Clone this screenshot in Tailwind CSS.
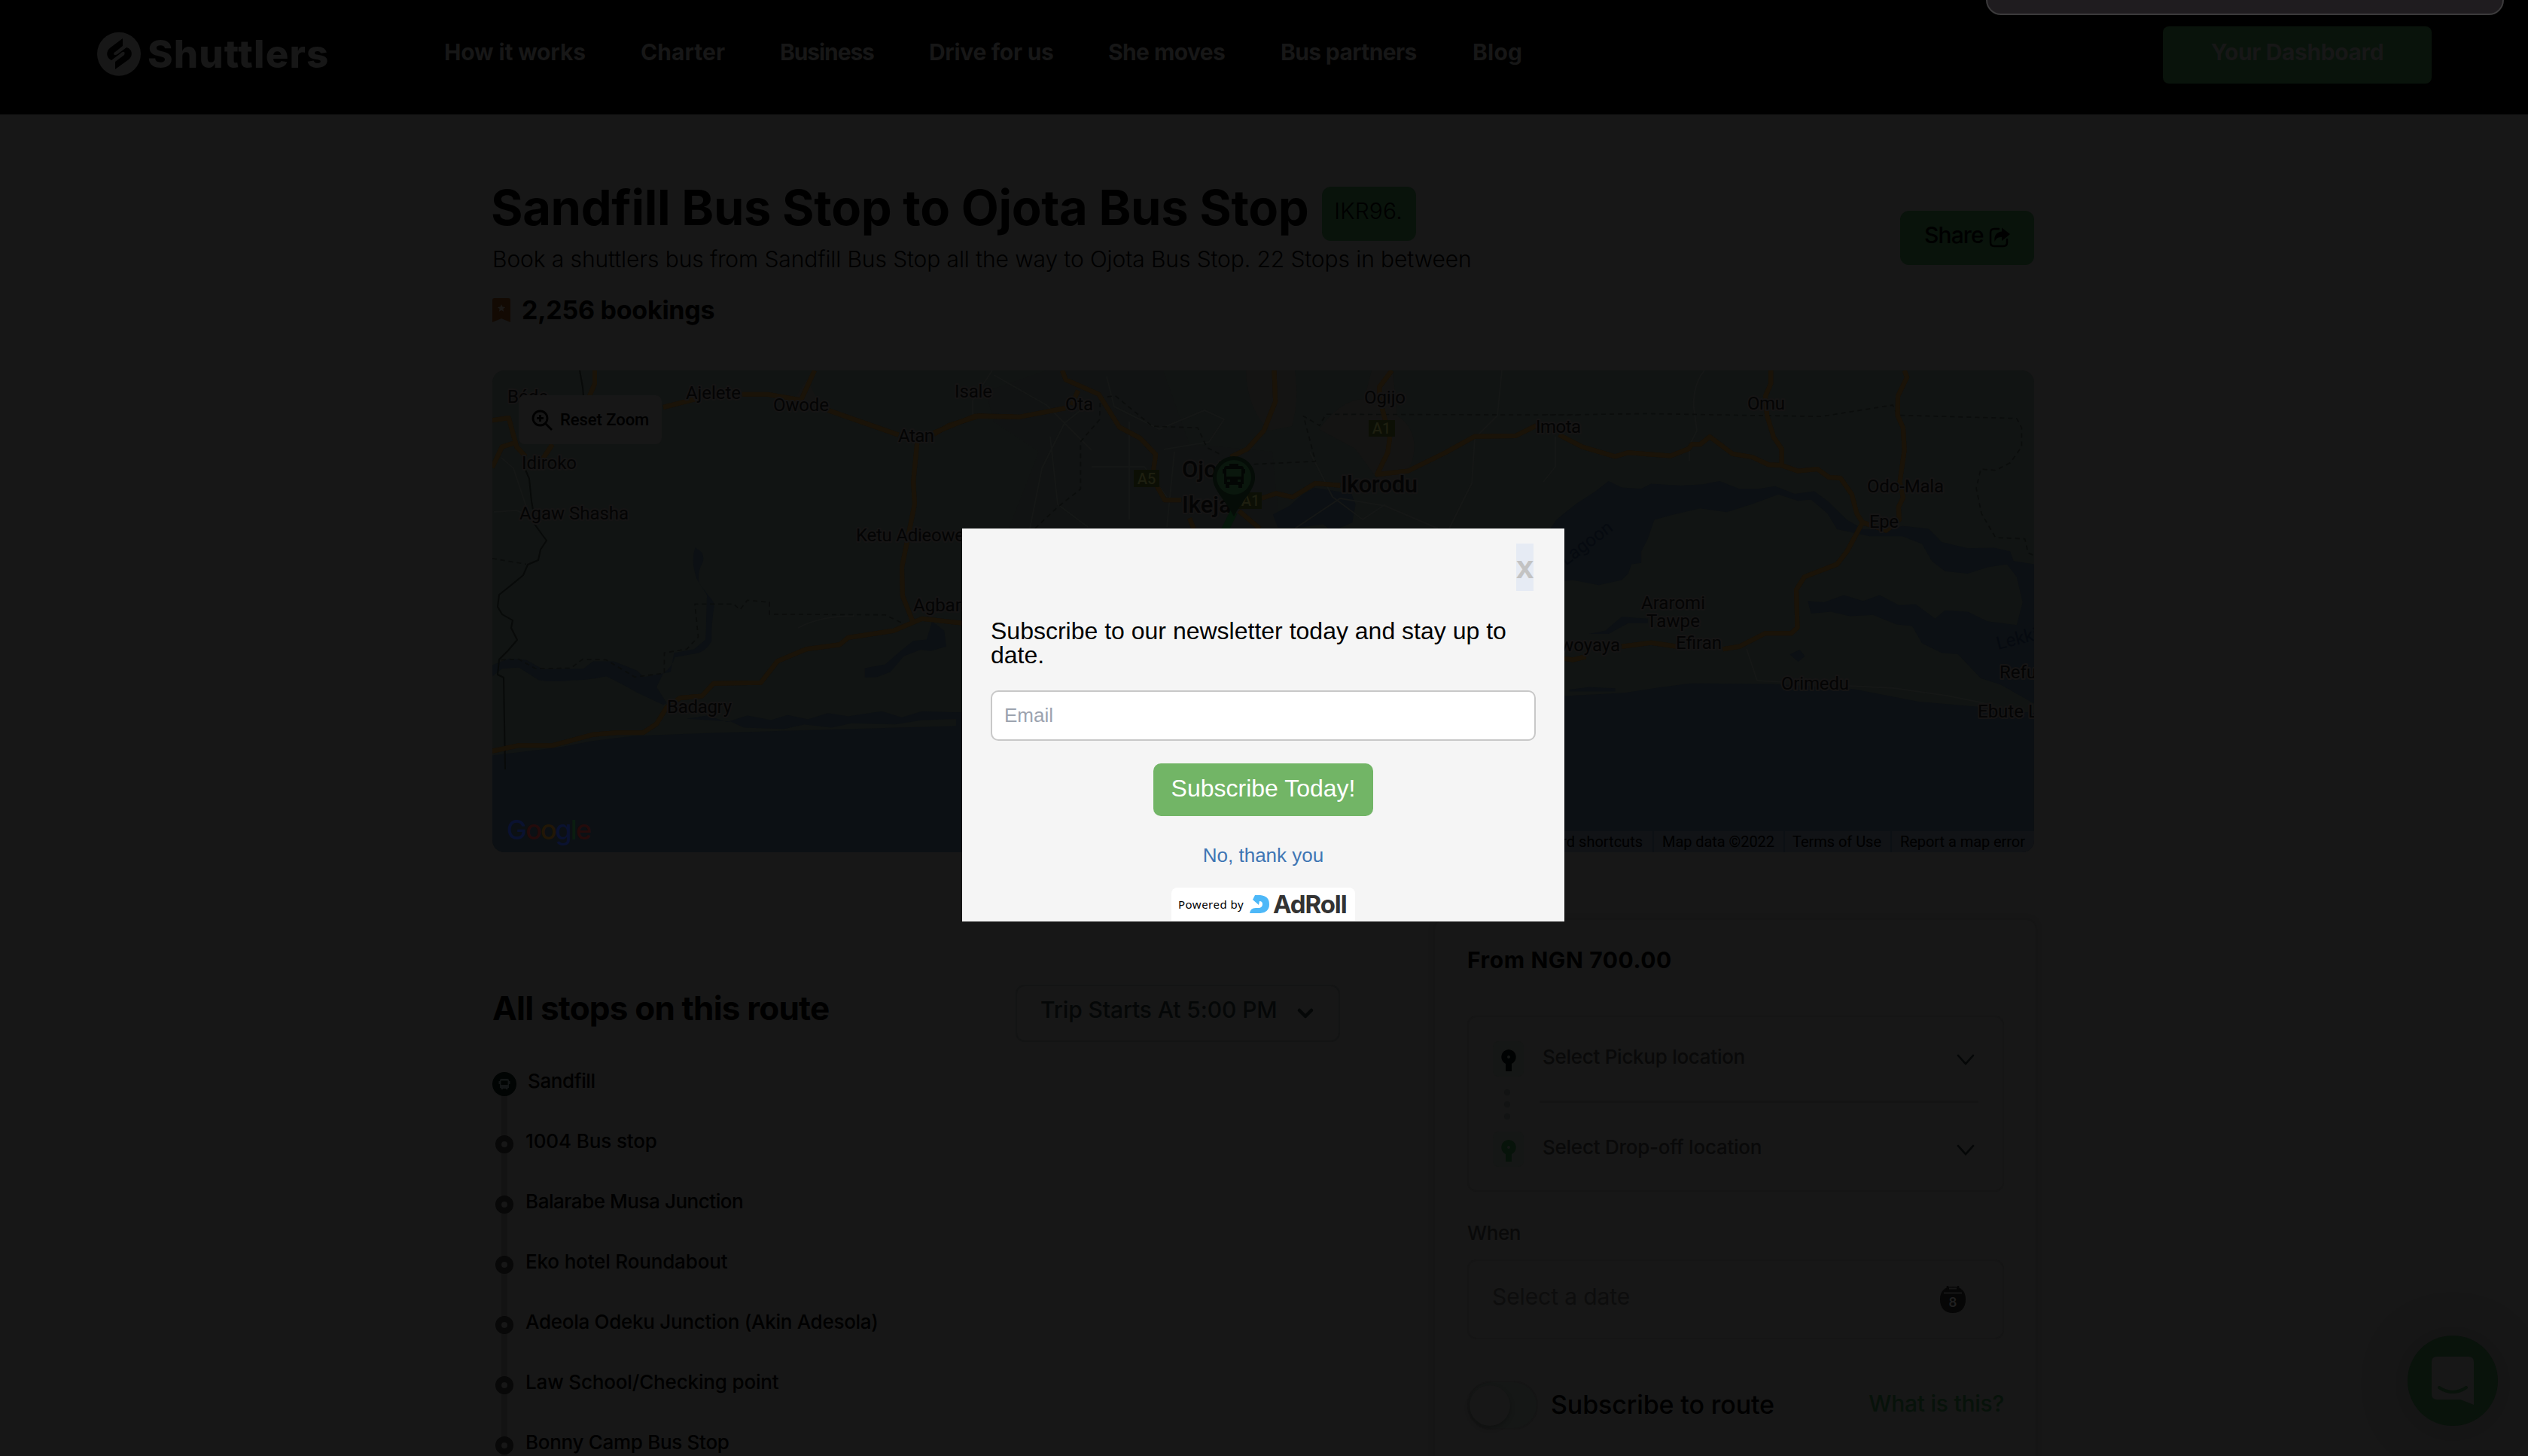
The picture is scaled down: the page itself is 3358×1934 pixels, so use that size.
<!DOCTYPE html>
<html lang="en">
<head>
<meta charset="utf-8">
<title>Sandfill Bus Stop to Ojota Bus Stop</title>
<script src="https://cdn.jsdelivr.net/npm/@tailwindcss/browser@4"></script>
</head>
<body class="bg-[#171717]">
<div class="relative h-[1934px] w-[3358px] overflow-hidden bg-[#171717] font-['Inter',sans-serif] text-black">

  <header class="flex h-[152px] items-start justify-between bg-black pl-[129px] pr-[128px] text-[30px] font-bold text-[#171717]">
    <div class="flex items-start whitespace-nowrap">
      <svg class="mt-[42px] h-[60px] w-[58px]" viewBox="129 42 58 60" fill="none">
        <circle cx="158" cy="71.700" r="29" fill="#171717"/>
        <path d="M163 51 147 63C140 68 141 77 148 80L160 71C164 67 167 69 165 73L153 82V92L171 79C177 74 176 65 168 63L156 72C152 75 149 71 153 69L163 61Z" fill="#000"/>
      </svg>
      <span class="ml-[9px] mt-[41px] w-[394px] text-[51px] font-extrabold leading-[62px] tracking-[1.1px]">Shuttlers</span>
      <nav class="flex pt-[49px] leading-[40px]">
        <a class="w-[261px] tracking-[-0.15px]">How it works</a>
        <a class="w-[185px] tracking-[0.05px]">Charter</a>
        <a class="w-[198px] tracking-[-1.1px]">Business</a>
        <a class="w-[238px] tracking-[-0.3px]">Drive for us</a>
        <a class="w-[229px] tracking-[-0.6px]">She moves</a>
        <a class="w-[255px] tracking-[-0.65px]">Bus partners</a>
        <a class="tracking-[0.2px]">Blog</a>
      </nav>
    </div>
    <a class="mt-[35px] h-[76px] w-[357px] rounded-lg bg-[#09130b] text-center leading-[68px] tracking-[-0.4px]">Your Dashboard</a>
  </header>
  <div class="absolute -top-8 left-[2638px] h-[52px] w-[688px] rounded-[20px] border-[2px] border-[#3b3a3b] bg-[#1f1c1f]"></div>

  <main class="w-[2704px] pl-[654px] pt-[84px]">
    <div class="flex w-[2048px] items-start justify-between">
      <div class="whitespace-nowrap">
        <div class="flex h-[84px] items-start">
          <h1 class="-ml-[2px] w-[1104px] text-[65px] font-bold leading-[80px] tracking-[-0.35px]">Sandfill Bus Stop to Ojota Bus Stop</h1>
          <span class="mt-[12px] h-[72px] w-[125px] rounded-xl bg-[#09130b] pr-[2px] text-center text-[30px] font-light leading-[64px] tracking-[0.1px]">IKR96.</span>
        </div>
        <p class="mt-1 text-[30px] font-light leading-[40px] tracking-[-0.1px]">Book a shuttlers bus from Sandfill Bus Stop all the way to Ojota Bus Stop. 22 Stops in between</p>
        <div class="mt-[28px] flex h-[40px] items-center">
          <svg class="h-[32px] w-[24px]" viewBox="0 0 24 32"><path d="M3 0H21Q24 0 24 3V32L12 27 0 32V3Q0 0 3 0Z" fill="#130a03"/><path d="m12 8 1.500 3.600 3.800.3-2.900 2.400.9 3.700L12 16l-3.300 2 .9-3.700-2.900-2.400 3.800-.3Z" fill="#1b1917"/></svg>
          <span class="ml-[15px] text-[34px] font-bold leading-[40px] tracking-[-0.25px]">2,256 bookings</span>
        </div>
      </div>
      <a class="mt-[44px] flex h-[72px] w-[178px] rounded-xl bg-[#09130b] pl-[32px] text-[30px] font-medium leading-[64px] tracking-[-0.9px]">Share
        <svg class="ml-[7px] mt-[22px] h-[28px] w-[28px]" viewBox="0 0 28 28" fill="none"><path d="M13 2H7Q2 2 2 7V20Q2 25 7 25H19Q24 25 24 20V16" stroke="#000" stroke-width="2.500" stroke-linecap="round"/><path d="M17 .5 28 9 17 18V13Q10 12 7.500 19 6 7 17 5.500Z" fill="#000"/></svg>
      </a>
    </div>

    <section class="relative mt-[60px] h-[640px] w-[2048px] overflow-hidden rounded-2xl bg-[#111413]">
      <svg class="block h-[640px] w-[2048px]" viewBox="654 492 2048 640" fill="none" stroke-linejoin="round">
        <!-- built-up areas -->
        <g fill="#141413">
          <path d="M1390 492H1545L1580 590 1690 600 1700 702H1340L1380 600 1320 560 1310 520Z" opacity=".3"/>
          <path d="M1655 492h65q6 40-4 74l-30 6q-30-30-31-80Z"/>
          <path d="M1752 570q30-40 60-40l10-38h28l6 60q30 20 20 60l-14 28-28 2-34-46Z"/>
          <path d="M1050 538l22-34 18 36Z"/>
        </g>
        <!-- ocean, lagoons and rivers -->
        <g fill="#0c1014">
          <g transform="translate(640 480) scale(.4464 .4209)">
            <path d="M31 1244 230 1218 330 1198 450 1182 700 1172 900 1166 1100 1160 1430 1150V1560H31Z"/>
            <path d="M640 592q24 10 18 40-20 40-10 70l28 40q20 20 14 40-8 60-6 100-20 40-60 42l-50 10q-6 30-34 50l-20 44 30 50-10 6-80-40q-50-30-90-50-60 14-100 12-50 8-100 0l-60-40-50 4-28 24v-36l50-20 50 4 50 30 120-2 30-24 60 0 70 30 20 20 80-16 10-60 60-12 34-30 4-140-30-50q-20-60-4-102Z"/>
            <path d="m1340 820 36 30 6 50-46 14-30-4-50 20-40 50-40 16-36 2v-30l60-12 44-40 40-34 40-4Z"/>
            <path d="M610 1128l60-10 60 20 60-20 70 14 50-16 60 14 60-20 60 10 100-16 60 20 60-20 120 4v20l-120 4-80 14-130-4-60 14-80-10-60 14-120-4-40-20Z"/>
          </g>
          <g transform="translate(1240 480) scale(.5485 .4847)">
            <path d="m822 420 40-24 30-30 30-20 30 6 60 10 10 30-8 50-50 24-20-20-60 10-50 0Z"/>
            <path d="M1500 458q20-50 68-64v200h-60Z"/>
          </g>
          <g transform="translate(2050 480) scale(.4337 .4209)">
            <path d="M0 700V560L40 500 100 450 160 410 200 378 240 398 300 402 330 386 420 392 490 388 540 378 600 402 660 402 710 394 770 418 830 410 870 440 930 500 980 530 1060 530 1100 520 1180 528 1220 570 1300 590 1380 588 1430 600 1440 630 1503 640V1080L1400 1020 1340 1000 1270 924 1220 920 1160 890 1130 836 1080 830 1010 800 940 804 880 790 820 796 810 756 860 760 920 738 980 756 1030 738 1090 770 1140 766 1200 812 1230 786 1300 790 1360 820 1450 832 1468 760 1450 680 1420 640 1360 650 1300 670 1230 662 1190 630 1160 576 1100 552 1000 552 900 530 870 480 820 436 780 440 720 420 640 450 562 476 480 464 390 486 340 500 320 560 300 600 300 636 270 640 260 670 240 690 170 706 90 690Z"/>
            <path d="M0 1062 65 1056 250 1046 350 1030 450 1016 700 1018 950 1034 1150 1074 1330 1090 1503 1110V1560H0Z"/>
            <path d="M140 860l50-10 50-44 80 6v14l-60 0-60 34ZM755 925l30-15 16 20-20 18ZM80 1036l60-8 80 4v10H80Z"/>
          </g>
          <rect x="1270" y="950" width="820" height="190"/>
        </g>
        <!-- minor roads -->
        <g stroke="#151716" stroke-width="2">
          <path d="M1320 498l70 40 60 60M1395 580l10 90 40 30M1368 702l16-80 30-60 30-24M1450 620h70l30 40M1500 560v130M1560 600l-10 100M1470 500l10 40 60 30 60-25 26 12-20 30-60 10M1740 600l30 60 40 30 30-20M1995 492l-6 60-30 30-4 60-30 60M2264 492q-16 20-14 50l4 30-10 20v20M2066 580v40l-16 20M1318 492l-26 40v20M656 680l30-2 20 8M666 608l16 14 20 60M1060 834q30-16 74-16M2320 862l14 42 36 2M2456 911l60 3 70 10 50 10M1720 702l60-40 60 10 70 30"/>
        </g>
        <!-- state and national borders -->
        <g stroke="#0b0d0c" stroke-width="1.600" stroke-dasharray="6 5">
          <g transform="translate(640 480) scale(.4464 .4209)"><path vector-effect="non-scaling-stroke" d="M31 622 132 640M58 942 110 940 160 970 265 968 300 940 370 942 455 996 543 984V920L610 908 644 870 634 766H750L768 784 790 754 856 760V798L1200 800 1260 830 1340 800"/></g>
          <g transform="translate(1240 480) scale(.5485 .4847)"><path vector-effect="non-scaling-stroke" d="M246 458 300 400 356 350V220L402 160 404 100 440 94 530 178 640 182 662 236 700 258M776 282 925 274 896 150 935 176 950 145 1568 147"/></g>
          <g transform="translate(2050 480) scale(.4337 .4209)"><path vector-effect="non-scaling-stroke" d="M0 168 110 168 320 165 850 174 1070 138 1085 170 1450 180 1465 210V270L1430 320 1385 344 1340 340 1326 400 1342 480 1385 556 1475 560 1485 605 1503 612"/></g>
        </g>
        <path stroke="#080a09" stroke-width="2" d="M770 492l4 22 1 12M698 624l5 12 3 30 4 22M710 696l10 14 6 8-8 12-3 14-14 6-6 14-12 10-20 16-2 16 6 10 14 8-2 10 8 16-12 14-12 12-2 20 8 4 2 122"/>
        <g fill="none">
          <g id="hw" stroke="#1a1308" stroke-width="6">
            <g transform="translate(640 480) scale(.4464 .4209)"><path vector-effect="non-scaling-stroke" d="M31 1230 110 1212 210 1212 330 1178 400 1172 480 1172 520 1144 550 1092 590 1062 655 1056 690 1016 830 1014 880 946 965 908 1065 894 1090 872 1225 850 1310 812 1430 826M1282 820 1252 740 1250 650 1288 450 1284 380 1296 250M540 145 640 118M775 104 850 104 950 122 990 29M1030 154 1240 232M1345 230 1390 202 1480 172 1580 174M31 186 80 178 104 270 130 300M31 335 60 270 95 258M336 29V70L320 110M210 262 180 310"/></g>
            <g transform="translate(1240 480) scale(.5485 .4847)"><path vector-effect="non-scaling-stroke" d="M0 196 100 150 210 152 320 128M312 25 320 50 400 90 450 180 500 210 538 255 530 320 560 380 600 380M350 80 335 120M825 25 828 110 800 190 760 240 720 262M795 375 830 362 870 372 925 334 985 340M1110 25 1080 70V100L1105 210 1100 250 1074 310 1150 300 1240 250 1310 206 1410 204 1460 176M740 410 790 458M620 430 630 458"/></g>
            <g transform="translate(2050 480) scale(.4337 .4209)"><path vector-effect="non-scaling-stroke" d="M48 232 120 270 220 300 260 288 390 298 445 276 455 262 480 262 510 238 580 292 640 302 690 326 730 328 780 346 840 340 875 366 910 368 945 420 960 480 978 508 930 600 900 640 800 680 775 720 778 840 760 858 680 858 600 900 550 908M410 900 330 888 240 900M130 932 90 942 65 938M697 29V70L680 110 685 170 706 240 730 276V328M1106 29 1114 50 1086 110 1085 170 1102 210 1106 280 1092 380 1102 430 1088 460 1090 500 1050 534 978 508"/></g>
          </g>
          <use href="#hw" class="[stroke:#15130f]"/>
        </g>
        <!-- route shields -->
        <g font-family="Roboto,sans-serif" font-size="20" font-weight="500" text-anchor="middle">
          <g fill="#0c0f05"><rect x="1506" y="624" width="34" height="23"/><rect x="1818" y="558" width="35" height="22"/><rect x="1642" y="654" width="34" height="22"/></g>
          <g fill="#1e1f10"><text x="1523" y="643">A5</text><text x="1835" y="576">A1</text><text x="1661" y="672">A1</text></g>
        </g>
        <!-- place names -->
        <g font-family="Roboto,sans-serif" font-size="24" fill="#040404" stroke="#161515" stroke-width="4" paint-order="stroke">
          <text x="674" y="535">Béde</text>
          <text x="911" y="530" textLength="73">Ajelete</text>
          <text x="1027" y="546" textLength="74">Owode</text>
          <text x="1268" y="528" textLength="50">Isale</text>
          <text x="1193" y="587" textLength="48">Atan</text>
          <text x="693" y="623" textLength="73">Idiroko</text>
          <text x="690" y="690" textLength="145">Agaw Shasha</text>
          <text x="1137" y="719" textLength="144">Ketu Adieowe</text>
          <text x="1213" y="812">Agbara</text>
          <text x="886" y="947" textLength="86">Badagry</text>
          <text x="1415" y="545" textLength="37">Ota</text>
          <text x="1812" y="536" textLength="55">Ogijo</text>
          <text x="2040" y="575" textLength="60">Imota</text>
          <text x="2321" y="544" textLength="50">Omu</text>
          <text x="2480" y="654" textLength="102">Odo-Mala</text>
          <text x="2483" y="701" textLength="39">Epe</text>
          <text x="2180" y="809" textLength="85">Araromi</text>
          <text x="2187" y="833" textLength="71">Tawpe</text>
          <text x="2226" y="862" textLength="61">Efiran</text>
          <text x="2152" y="865" text-anchor="end">Awoyaya</text>
          <text x="2366" y="916" textLength="90">Orimedu</text>
          <text x="2656" y="901">Refu</text>
          <text x="2627" y="953">Ebute L</text>
          <g font-size="31" font-weight="500"><text x="1570" y="634">Ojota</text><text x="1570" y="681">Ikeja</text><text x="1781" y="654" textLength="102">Ikorodu</text></g>
          <g fill="#060a10" stroke="none"><text transform="translate(2080 752) rotate(-37)">Lagoon</text><text transform="translate(2654 863) rotate(-14)">Lekki</text></g>
        </g>
        <!-- destination pin and the route below it -->
        <path d="M1639 680 1626 706" stroke="#06180b" stroke-width="10"/>
        <path d="M1639 606a28 28 0 0 1 28 28c0 17-16 29-28 52-12-23-28-35-28-52a28 28 0 0 1 28-28Z" fill="#050c07"/>
        <circle cx="1639" cy="634" r="23" fill="#0a170d"/>
        <path fill="#030604" fill-rule="evenodd" d="M1633 616h12v3h4q3 0 3 4h2v6h-2v14h-2v5h-5v-4h-12v4h-5v-5h-2v-14h-2v-6h2q0-4 3-4h4ZM1629 623v10h20v-10ZM1630 637v3h4v-3ZM1644 637v3h4v-3Z"/>
        <!-- map provider -->
        <g font-family="Inter,sans-serif" font-size="36" font-weight="500">
          <text x="673" y="1115" textLength="113"><tspan fill="#0a1230">G</tspan><tspan fill="#240b0b">o</tspan><tspan fill="#221706">o</tspan><tspan fill="#0a1230">g</tspan><tspan fill="#0a1d10">l</tspan><tspan fill="#240b0b">e</tspan></text>
        </g>
        <rect x="2060" y="1104" width="642" height="28" fill="#111316"/>
        <path d="M2196 1104v28M2370 1104v28M2512 1104v28" stroke="#0c1014" stroke-width="2"/>
        <g font-family="Roboto,sans-serif" font-size="20" fill="#000">
          <text x="2182" y="1125" text-anchor="end">Keyboard shortcuts</text><text x="2208" y="1125" textLength="149">Map data ©2022</text><text x="2381" y="1125" textLength="118">Terms of Use</text><text x="2524" y="1125" textLength="166">Report a map error</text>
        </g>
      </svg>
      <a class="absolute left-[35px] top-[33px] flex h-[65px] w-[190px] items-center rounded-lg bg-[#171717] pl-[17px] font-['Roboto',sans-serif] text-[22px] font-medium whitespace-nowrap">
        <svg class="h-[28px] w-[28px]" viewBox="0 0 28 28" fill="none" stroke="#000" stroke-width="2.800"><circle cx="11.500" cy="11.500" r="9.500"/><path d="m18.500 18.500 8.500 8.500M11.500 7v9M7 11.500h9"/></svg>
        <span class="ml-[10px] tracking-[-0.05px]">Reset Zoom</span>
      </a>
    </section>

    <div class="flex items-start justify-between">
      <section class="mt-[176px] w-[1126px]">
        <div class="flex items-start justify-between">
          <h2 class="mt-[3px] whitespace-nowrap text-[44px] font-bold leading-[56px] tracking-[-0.8px]">All stops on this route</h2>
          <div class="flex h-[76px] w-[431px] items-center justify-between rounded-xl border-2 border-[#131414] pl-[31px] pr-[32px]">
            <span class="whitespace-nowrap pb-[10px] text-[30px] font-medium leading-[40px] tracking-[-0.1px] text-[#050707]">Trip Starts At 5:00 PM</span>
            <svg class="h-[16px] w-[24px]" viewBox="0 0 24 16" fill="none" stroke="#050707" stroke-width="4.500" stroke-linecap="round" stroke-linejoin="round"><path d="m4 4 8 8 8-8"/></svg>
          </div>
        </div>
        <div class="relative mt-[16px] whitespace-nowrap text-[26px] font-medium leading-[32px]">
          <div class="absolute left-[12px] top-[40px] h-[560px] w-[8px] bg-[#131313]"></div>
          <ul class="relative">
            <li class="flex h-[80px] items-center">
              <svg class="h-[32px] w-[32px]" viewBox="0 0 32 32"><circle cx="16" cy="16" r="16" fill="#010403"/><path fill="#131617" fill-rule="evenodd" d="M12 9h8q2 0 2 2v1h1.500v4H22v5h-1.500v2H18v-1h-4v1h-2.500v-2H10v-5H8.500v-4H10v-1q0-2 2-2ZM11.500 11.500V17h9v-5.500Z"/></svg>
              <span class="ml-[15px] pb-[8px] tracking-[-0.4px]">Sandfill</span>
            </li>
            <li class="flex h-[80px] items-center gap-[16px] pl-[4px]"><i class="h-[24px] w-[24px] rounded-full border-8 border-[#080808] bg-[#171717]"></i><span class="pb-[8px] tracking-[-0.12px]">1004 Bus stop</span></li>
            <li class="flex h-[80px] items-center gap-[16px] pl-[4px]"><i class="h-[24px] w-[24px] rounded-full border-8 border-[#080808] bg-[#171717]"></i><span class="pb-[8px] tracking-[-0.45px]">Balarabe Musa Junction</span></li>
            <li class="flex h-[80px] items-center gap-[16px] pl-[4px]"><i class="h-[24px] w-[24px] rounded-full border-8 border-[#080808] bg-[#171717]"></i><span class="pb-[8px] tracking-[-0.16px]">Eko hotel Roundabout</span></li>
            <li class="flex h-[80px] items-center gap-[16px] pl-[4px]"><i class="h-[24px] w-[24px] rounded-full border-8 border-[#080808] bg-[#171717]"></i><span class="pb-[8px] tracking-[-0.28px]">Adeola Odeku Junction (Akin Adesola)</span></li>
            <li class="flex h-[80px] items-center gap-[16px] pl-[4px]"><i class="h-[24px] w-[24px] rounded-full border-8 border-[#080808] bg-[#171717]"></i><span class="pb-[8px] tracking-[-0.16px]">Law School/Checking point</span></li>
            <li class="flex h-[80px] items-center gap-[16px] pl-[4px]"><i class="h-[24px] w-[24px] rounded-full border-8 border-[#080808] bg-[#171717]"></i><span class="pb-[8px] tracking-[-0.3px]">Bonny Camp Bus Stop</span></li>
          </ul>
        </div>
      </section>

      <aside class="mt-[90px] h-[780px] w-[798px] shrink-0 rounded-xl bg-[#171717] pl-[43px] pr-[42px] pt-[33px] shadow-[0_0_8px_1px_rgba(0,0,0,0.14)]">
        <h3 class="whitespace-nowrap text-[30px] font-bold leading-[40px] tracking-[0.6px]">From NGN 700.00</h3>
        <div class="mt-[54px] h-[234px] rounded-xl border-2 border-[#151515] pl-[32px] pr-[36px] pt-[32px] text-[26px] font-medium leading-[32px] text-[#090909]">
          <div class="flex h-[47px] items-center">
            <span class="flex h-[47px] w-[41px] items-center justify-center rounded-lg bg-[#151716]"><svg class="mt-[3px] h-[32px] w-[22px]" viewBox="0 0 22 32"><path d="M11 2a10 10 0 0 1 4 19v10H7V21a10 10 0 0 1 4-19Zm0 8a2 2 0 1 0 0 4 2 2 0 0 0 0-4Z" fill="#000202" fill-rule="evenodd"/></svg></span>
            <span class="ml-[25px] grow pb-[5px] tracking-[-0.28px]">Select Pickup location</span>
            <svg class="mt-[3px] h-[16px] w-[26px]" viewBox="0 0 26 16" fill="none" stroke="#050707" stroke-width="2.600" stroke-linecap="round"><path d="m3 2 10 11L23 2"/></svg>
          </div>
          <div class="flex h-[73px] items-center">
            <div class="ml-[15px] flex flex-col gap-2"><i class="h-2 w-2 rounded-full bg-[#121313]"></i><i class="h-2 w-2 rounded-full bg-[#121313]"></i><i class="h-2 w-2 rounded-full bg-[#121313]"></i></div>
            <div class="-mr-[4px] mb-[6px] ml-[39px] h-[3px] grow bg-[#141414]"></div>
          </div>
          <div class="flex h-[47px] items-center">
            <span class="flex h-[47px] w-[41px] items-center justify-center rounded-lg bg-[#151716]"><svg class="mt-[3px] h-[32px] w-[22px]" viewBox="0 0 22 32"><path d="M11 2a10 10 0 0 1 4 19v10H7V21a10 10 0 0 1 4-19Zm0 8a2 2 0 1 0 0 4 2 2 0 0 0 0-4Z" fill="#07130a" fill-rule="evenodd"/></svg></span>
            <span class="ml-[25px] grow pb-[5px] tracking-[-0.25px]">Select Drop-off location</span>
            <svg class="mt-[3px] h-[16px] w-[26px]" viewBox="0 0 26 16" fill="none" stroke="#050707" stroke-width="2.600" stroke-linecap="round"><path d="m3 2 10 11L23 2"/></svg>
          </div>
        </div>
        <p class="mt-[39px] text-[26px] font-medium leading-[32px] tracking-[-0.41px] text-[#090909]">When</p>
        <div class="mt-[19px] flex h-[106px] items-center justify-between rounded-xl border-2 border-[#151515] pl-[31px] pr-[49px]">
          <span class="pb-[9px] text-[30px] leading-[40px] tracking-[-0.1px] text-[#0d0d0d]">Select a date</span>
          <svg class="h-[36px] w-[34px]" viewBox="0 0 34 36"><path d="M17 1C28 1 34 7 34 18S28 36 17 36 0 29 0 18 6 1 17 1Z" fill="#060606"/><path d="M5 9.500h24M12 3.500h10" stroke="#171717" stroke-width="2.200"/><path d="M10 0v6M24 0v6" stroke="#060606" stroke-width="2.500"/><text x="17" y="28" text-anchor="middle" font-family="Inter,sans-serif" font-size="17" font-weight="600" fill="#202020">8</text></svg>
        </div>
        <div class="mt-[55px] flex h-[65px] items-center whitespace-nowrap">
          <span class="flex h-[65px] w-[94px] items-center rounded-full border-2 border-[#151515] bg-[#151716] pl-[1px]"><i class="h-[54px] w-[54px] rounded-full bg-[#171717] shadow-[0_3px_6px_rgba(0,0,0,0.25)]"></i></span>
          <span class="ml-[17px] grow pb-[2px] text-[34px] font-medium leading-[40px] tracking-[-0.12px]">Subscribe to route</span>
          <span class="pb-[5px] text-[30px] font-medium leading-[40px] tracking-[-0.25px] text-[#07120a]">What is this?</span>
        </div>
      </aside>
    </div>
  </main>

  <div class="absolute left-[3198px] top-[1774px] flex h-[120px] w-[120px] items-center justify-center rounded-full bg-[#09130b] shadow-[0_4px_70px_rgba(0,0,0,0.2)]">
    <svg class="mt-[-1px] h-[64px] w-[56px]" viewBox="0 0 56 64" fill="none"><path d="M7 0H49Q56 0 56 7V64L38 57H7Q0 57 0 50V7Q0 0 7 0Z" fill="#171717"/><path d="M10 41Q28 53 46 41" stroke="#09130b" stroke-width="4" stroke-linecap="round"/></svg>
  </div>

  <div class="absolute left-[1278px] top-[702px] h-[522px] w-[800px] bg-[#f5f5f5] px-[38px] pt-[20px] font-['Liberation_Sans',sans-serif]">
    <div class="flex justify-end pr-[3px]"><span class="h-[63px] w-[23px] bg-[#e6ebf4] text-[42px] font-bold leading-[63px] text-[#c3c3c3]">x</span></div>
    <p class="mt-[37px] whitespace-nowrap text-[32px] leading-[32px]">Subscribe to our newsletter today and stay up to<br>date.</p>
    <div class="mt-[31px] h-[67px] w-[724px] rounded-[10px] border-2 border-[#c8c8c8] bg-white pl-[16px] text-[26px] leading-[62px] text-[#9ca3af]">Email</div>
    <div class="mx-auto mt-[30px] h-[70px] w-[292px] rounded-[10px] bg-[#72b566] text-center text-[32px] leading-[67px] text-white">Subscribe Today!</div>
    <p class="mt-[37px] text-center text-[26px] leading-[30px] text-[#3f76b4]">No, thank you</p>
    <div class="mx-auto mt-[28px] flex h-[44px] w-[244px] items-start whitespace-nowrap rounded-t-lg bg-white pl-[9px]">
      <span class="mt-[9px] w-[95px] font-['Noto_Sans',sans-serif] text-[15px] leading-[26px] tracking-[0.5px]">Powered by</span>
      <svg class="mt-[10px] h-[24px] w-[27px]" viewBox="0 0 27 24"><path d="M7 0H14Q26 1 26 12T14 24H0Q1 17 8 17H13Q17 16 17 12T13 8L12 13 4 6Z" fill="#4db8f8"/></svg>
      <span class="ml-[4px] mt-[2px] font-['Inter',sans-serif] text-[33px] font-bold leading-[40px] tracking-[-1.1px] text-[#333]">AdRoll</span>
    </div>
  </div>
</div>
</body>
</html>
